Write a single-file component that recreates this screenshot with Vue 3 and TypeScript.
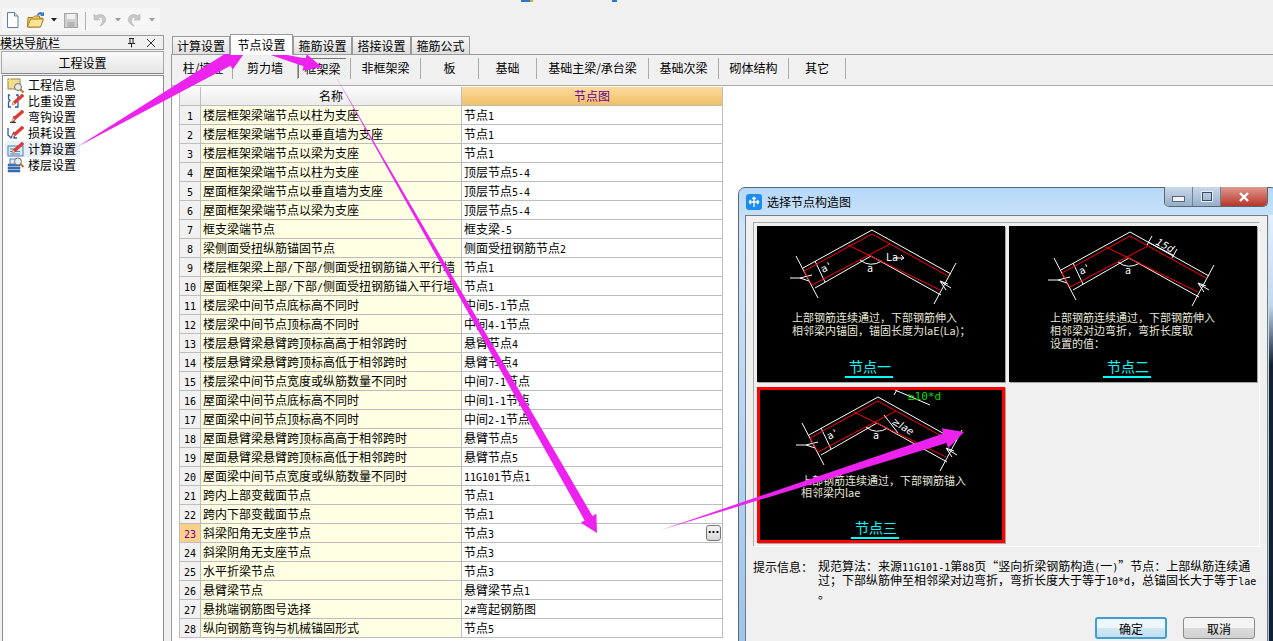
<template>
  <div class="app">
    <div class="toolbar-row">
      <div class="toolbar">
        <svg class="tb-icons" width="160" height="23" viewBox="0 0 160 23">
          <!-- new -->
          <path d="M7.5 4.5h7l3.5 3.5v11.500h-10.500z" fill="#fff" stroke="#5a7ea8" />
          <path d="M14.500 4.500v3.500h3.500" fill="#dce8f4" stroke="#5a7ea8" />
          <!-- open -->
          <path d="M28 9.500h5l1.500-1.500h5v2h3l-3 9h-12z" fill="#f2c75c" stroke="#a87d24" />
          <path d="M27.500 19l3-8h13l-3 8z" fill="#fbe39a" stroke="#a87d24" />
          <path d="M37 7c1-3 4-4 6-2l1-1v4h-4l1.500-1c-1.500-1-3-.5-3.500 1z" fill="#3b78c4" />
          <path d="M51 10h6l-3 3.500z" fill="#222" />
          <!-- save -->
          <rect x="64.500" y="5.500" width="13" height="14" fill="#d0d0d0" stroke="#a4a4a4" />
          <rect x="67" y="6" width="8" height="5" fill="#f2f2f2" />
          <rect x="67.500" y="14" width="7" height="5" fill="#b4b4b4" />
          <line x1="85.500" y1="4" x2="85.500" y2="22" stroke="#b0b0b0" />
          <!-- undo -->
          <path d="M94 6v6h6l-2-2c3-2 6 1 4 5l-2 3c5-2 7-6 5-9-2-3-6-3-9-1z" fill="#c8c8c8" stroke="#b4b4b4" stroke-width=".6" />
          <path d="M115 10h6l-3 3.500z" fill="#9a9a9a" />
          <!-- redo -->
          <path d="M140 6v6h-6l2-2c-3-2-6 1-4 5l2 3c-5-2-7-6-5-9 2-3 6-3 9-1z" fill="#c8c8c8" stroke="#b4b4b4" stroke-width=".6" />
          <path d="M149 10h6l-3 3.500z" fill="#9a9a9a" />
        </svg>
      </div>
    </div>

    <div class="main">
      <aside class="nav">
        <div class="nav-head">
          <span>模块导航栏</span>
          <svg width="34" height="12" viewBox="0 0 34 12">
            <path d="M3 1.500h5M4 1.500v5M7 1.500v5M2 6.500h7M5.500 6.500v4" stroke="#222" fill="none" />
            <path d="M21 2l8 8M29 2l-8 8" stroke="#333" fill="none" />
          </svg>
        </div>
        <div class="nav-btn">工程设置</div>
        <ul class="nav-list">
          <li v-for="item in navItems" :key="item.name" class="nav-item" :class="{ on: item.on }">
            <svg width="18" height="16" viewBox="0 0 18 16">
              <template v-if="item.kind === 'info'">
                <rect x="1" y="2" width="12" height="10" fill="#f2dc9c" stroke="#9a8450" />
                <path d="M3 1l1 2 2 .5-2 1-1 2-1-2-2-1 2-.5z" fill="#ffe94a" />
                <circle cx="11" cy="10" r="3.500" fill="#dfeaf5" stroke="#7a6a50" />
                <path d="M13.500 12.500l3 3" stroke="#b07a20" stroke-width="2" />
              </template>
              <template v-else-if="item.kind === 'calc'">
                <rect x="1" y="5" width="15" height="10" fill="#dbe9f8" stroke="#4f7fb5" />
                <path d="M3 8h8M3 10.500h10M3 13h10" stroke="#4f7fb5" />
              </template>
              <template v-else-if="item.kind === 'floor'">
                <path d="M1 7h12v2H1zM1 10h12v2H1zM1 13h12v2H1z" fill="#3a76c0" stroke="#2a5590" stroke-width=".5" />
                <rect x="3" y="2" width="10" height="5" fill="#e4eef9" stroke="#4f7fb5" />
                <circle cx="11" cy="4.500" r="3.500" fill="#e8edf2" stroke="#777" />
                <path d="M13.500 7l3 3" stroke="#b07a20" stroke-width="2" />
              </template>
              <template v-else-if="item.kind === 'weight'">
                <path d="M3 2H1.500v4L3 7.500 1.500 9v5H4M9 2h2v4L9.500 7.500 11 9v5H8" fill="none" stroke="#2d5a9a" stroke-width="1.300" />
              </template>
              <template v-else-if="item.kind === 'hook'">
                <path d="M7 7v6H3.500M3 13.500h6" fill="none" stroke="#333" stroke-width="1.200" />
              </template>
              <template v-else>
                <path d="M1 3v7l3 3 3-6v6h3" fill="none" stroke="#2d5a9a" stroke-width="1.300" />
              </template>
              <template v-if="item.kind !== 'info' && item.kind !== 'floor'">
                <path d="M6 9l9-8 2 2-9 8-3 1z" fill="#e8392e" stroke="#a8201a" stroke-width=".5" />
                <path d="M5 12l1-3 2 2z" fill="#f3d9a8" />
              </template>
            </svg>
            <span>{{ item.name }}</span>
          </li>
        </ul>
      </aside>

      <section class="work">
        <div class="tabs">
          <div v-for="t in tabs" :key="t" class="tab" :class="{ active: t === '节点设置' }">{{ t }}</div>
        </div>
        <div class="panel">
          <div class="subtabs">
            <div
              v-for="s in subTabs"
              :key="s.name"
              class="subtab"
              :style="{ width: s.w + 'px' }"
            >
              <span :class="{ sel: s.sel }">{{ s.name }}</span>
            </div>
          </div>
          <div class="grid-area">
            <div class="grid">
              <div class="row head">
                <div class="cell num"></div>
                <div class="cell title">名称</div>
                <div class="cell title active-col">节点图</div>
              </div>
              <div v-for="(r, i) in rows" :key="i" class="row">
                <div class="cell num" :class="{ cur: i === 22 }">
                  <span class="lat">{{ i + 1 }}</span>
                </div>
                <div class="cell name">
                  <span v-for="(s, j) in seg(r[0])" :key="j" :class="{ lat: s.lat }">{{ s.t }}</span>
                </div>
                <div class="cell val">
                  <span v-for="(s, j) in seg(r[1])" :key="j" :class="{ lat: s.lat }">{{ s.t }}</span>
                  <button v-if="i === 22" class="more">···</button>
                </div>
              </div>
            </div>
          </div>
        </div>
      </section>
    </div>

    <div class="dialog">
      <div class="dlg-title">
        <svg width="16" height="16" viewBox="0 0 16 16">
          <rect width="16" height="16" rx="3" fill="#1c8cf0" />
          <path d="M8 3v10M3 8h10M3 8l2-2M3 8l2 2M13 8l-2-2M13 8l-2 2M8 3L6.500 5M8 3l1.500 2" stroke="#fff" stroke-width="1.300" fill="none" />
        </svg>
        <span>选择节点构造图</span>
        <div class="win-btns">
          <div class="wb"><i class="min"></i></div>
          <div class="wb"><i class="max"></i></div>
          <div class="wb close">
            <svg width="12" height="10" viewBox="0 0 12 10">
              <path d="M2 1l8 8M10 1l-8 8" stroke="#fff" stroke-width="2.400" />
            </svg>
          </div>
        </div>
      </div>
      <div class="dlg-body">
        <div class="pics">
          <div v-for="c in cells" :key="c.label" class="pic" :class="{ picked: c.picked }">
            <svg width="248" height="156" viewBox="0 0 248 156">
              <g :transform="`translate(${c.dx} ${c.dy})`" fill="none">
                <g stroke="#fff">
                  <polyline points="46,42 115,4 194,48" />
                  <polyline points="58,62 114,30 184,69" />
                  <line x1="39" y1="30" x2="61" y2="72" />
                  <line x1="199" y1="37" x2="177" y2="78" />
                  <line x1="58" y1="35" x2="68" y2="56" />
                  <path d="M43 52l12-3M43 52l9 3M43 52h-10" />
                  <path d="M183 55l6 9M183 55l8 3M184 56l10 6" />
                  <path d="M103 34q10 8 22 1" />
                </g>
                <g stroke="#f00">
                  <polyline points="47,45 115,8 191,50" />
                  <line x1="55" y1="59" x2="133" y2="18" />
                  <line x1="91" y1="19" x2="183" y2="64" />
                  <line x1="47" y1="45" x2="55" y2="59" />
                </g>
                <text x="110" y="46" class="cad-a">a</text>
                <text x="66" y="47" class="cad-a" transform="rotate(-28 66 47)">a'</text>
                <template v-if="c.kind === 1">
                  <text x="129" y="35" class="cad-a">La</text>
                  <path d="M137 32h10l-3 -3M147 32l-3 2" stroke="#fff" />
                </template>
                <template v-if="c.kind === 2">
                  <text x="140" y="16" class="cad-i" transform="rotate(28 140 16)">15d</text>
                  <path d="M133 14l25 13M137 8l-5 9M162 21l-5 9" stroke="#fff" />
                </template>
                <template v-if="c.kind === 3">
                  <path d="M132 -3l35 15M137 -8l-6 10" stroke="#fff" />
                  <path d="M121 22l14 18" stroke="#fff" />
                  <text x="128" y="30" class="cad-i" transform="rotate(32 128 30)">≥lae</text>
                </template>
              </g>
              <text v-if="c.kind === 3" x="151" y="13" class="green">≥10*d</text>
              <text
                v-for="(l, n) in c.lines"
                :key="n"
                :x="c.tx"
                :y="l[1]"
                class="desc"
              >{{ l[0] }}</text>
              <text :x="c.lx" y="146" class="cap">{{ c.label }}</text>
              <line :x1="c.ux" y1="151" :x2="c.ux + 48" y2="151" stroke="#0ff" stroke-width="2" />
            </svg>
          </div>
        </div>
        <div class="hint">
          <div class="hint-label">提示信息：</div>
          <div class="hint-text">
            <div v-for="(l, n) in hintLines" :key="n">
              <span v-for="(s, j) in seg(l)" :key="j" :class="{ lat: s.lat }">{{ s.t }}</span>
            </div>
          </div>
        </div>
        <div class="dlg-btns">
          <button class="btn primary">确定</button>
          <button class="btn">取消</button>
        </div>
      </div>
    </div>

    <svg class="arrows" width="1273" height="641" viewBox="0 0 1273 641">
      <rect x="521" y="0" width="9" height="2" fill="#2a7ac8" />
      <rect x="530" y="0" width="3" height="2" fill="#c8b040" />
      <rect x="612" y="0" width="5" height="2" fill="#2a7ac8" />
      <polygon v-for="(a, i) in arrows" :key="i" :points="a" fill="#ee22ee" />
    </svg>
  </div>
</template>

<script setup lang="ts">
const navItems = [
  { name: '工程信息', kind: 'info' },
  { name: '比重设置', kind: 'weight' },
  { name: '弯钩设置', kind: 'hook' },
  { name: '损耗设置', kind: 'loss' },
  { name: '计算设置', kind: 'calc', on: true },
  { name: '楼层设置', kind: 'floor' }
]

const tabs = ['计算设置', '节点设置', '箍筋设置', '搭接设置', '箍筋公式']

const subTabs = [
  { name: '柱/墙柱', w: 59 },
  { name: '剪力墙', w: 65 },
  { name: '框架梁', w: 53, sel: true },
  { name: '非框架梁', w: 70 },
  { name: '板', w: 58 },
  { name: '基础', w: 58 },
  { name: '基础主梁/承台梁', w: 112 },
  { name: '基础次梁', w: 70 },
  { name: '砌体结构', w: 70 },
  { name: '其它', w: 57 }
]

const rows = [
  ['楼层框架梁端节点以柱为支座', '节点1'],
  ['楼层框架梁端节点以垂直墙为支座', '节点1'],
  ['楼层框架梁端节点以梁为支座', '节点1'],
  ['屋面框架梁端节点以柱为支座', '顶层节点5-4'],
  ['屋面框架梁端节点以垂直墙为支座', '顶层节点5-4'],
  ['屋面框架梁端节点以梁为支座', '顶层节点5-4'],
  ['框支梁端节点', '框支梁-5'],
  ['梁侧面受扭纵筋锚固节点', '侧面受扭钢筋节点2'],
  ['楼层框架梁上部/下部/侧面受扭钢筋锚入平行墙', '节点1'],
  ['屋面框架梁上部/下部/侧面受扭钢筋锚入平行墙', '节点1'],
  ['楼层梁中间节点底标高不同时', '中间5-1节点'],
  ['楼层梁中间节点顶标高不同时', '中间4-1节点'],
  ['楼层悬臂梁悬臂跨顶标高高于相邻跨时', '悬臂节点4'],
  ['楼层悬臂梁悬臂跨顶标高低于相邻跨时', '悬臂节点4'],
  ['楼层梁中间节点宽度或纵筋数量不同时', '中间7-1节点'],
  ['屋面梁中间节点底标高不同时', '中间1-1节点'],
  ['屋面梁中间节点顶标高不同时', '中间2-1节点'],
  ['屋面悬臂梁悬臂跨顶标高高于相邻跨时', '悬臂节点5'],
  ['屋面悬臂梁悬臂跨顶标高低于相邻跨时', '悬臂节点5'],
  ['屋面梁中间节点宽度或纵筋数量不同时', '11G101节点1'],
  ['跨内上部变截面节点', '节点1'],
  ['跨内下部变截面节点', '节点1'],
  ['斜梁阳角无支座节点', '节点3'],
  ['斜梁阴角无支座节点', '节点3'],
  ['水平折梁节点', '节点3'],
  ['悬臂梁节点', '悬臂梁节点1'],
  ['悬挑端钢筋图号选择', '2#弯起钢筋图'],
  ['纵向钢筋弯钩与机械锚固形式', '节点5']
]

const cells = [
  {
    label: '节点一', kind: 1, dx: 0, dy: 0, tx: 35, lx: 92, ux: 88,
    lines: [['上部钢筋连续通过，下部钢筋伸入', 96], ['相邻梁内锚固，锚固长度为laE(La)；', 109]]
  },
  {
    label: '节点二', kind: 2, dx: 6, dy: 2, tx: 41, lx: 98, ux: 94,
    lines: [['上部钢筋连续通过，下部钢筋伸入', 96], ['相邻梁对边弯折，弯折长度取', 109], ['设置的值：', 122]]
  },
  {
    label: '节点三', kind: 3, dx: 6, dy: 6, tx: 44, lx: 98, ux: 94, picked: true,
    lines: [['上部钢筋连续通过，下部钢筋锚入', 98], ['相邻梁内lae', 110]]
  }
]

const hintLines = [
  '规范算法：来源11G101-1第88页“竖向折梁钢筋构造(一)”节点：上部纵筋连续通',
  '过；下部纵筋伸至相邻梁对边弯折，弯折长度大于等于10*d，总锚固长大于等于lae',
  '。'
]

// latin runs get a narrower font, the original uses half-width 6px glyphs
const seg = (text: string) => {
  const parts = text.match(/[\x20-\x7e]+|[^\x20-\x7e]+/g) || []
  return parts.map((t) => ({ t, lat: /^[\x20-\x7e]/.test(t) }))
}

// tapered arrow: pointed tail, shaft width w, head of length hl and width hw
const arrow = (x0: number, y0: number, x1: number, y1: number, w: number, hl: number, hw: number) => {
  const len = Math.hypot(x1 - x0, y1 - y0)
  const ux = (x1 - x0) / len
  const uy = (y1 - y0) / len
  const nx = x1 - ux * hl
  const ny = y1 - uy * hl
  const pt = (d: number) => `${nx - uy * d},${ny + ux * d}`
  return [`${x0},${y0}`, pt(w / 2), pt(hw / 2), `${x1},${y1}`, pt(-hw / 2), pt(-w / 2)].join(' ')
}

const arrows = [
  arrow(77, 147, 248, 48, 13, 24, 22),
  arrow(250, 48, 322, 67, 8, 18, 17),
  arrow(335, 75, 597, 533, 9, 17, 18),
  arrow(661, 530, 964, 432, 10, 20, 21)
]
</script>

<style scoped>
.app {
  position: relative;
  width: 1273px;
  height: 641px;
  overflow: hidden;
  display: flex;
  flex-direction: column;
  background: #f0f0f0;
  color: #000;
  font: 12px/16px "Noto Sans CJK SC", sans-serif;
}
.lat {
  font-family: "DejaVu Sans Mono", monospace;
  font-size: 10px;
}
.toolbar-row {
  height: 35px;
  padding: 8px 0 0 2px;
  box-sizing: border-box;
  flex: none;
}
.toolbar {
  width: 158px;
  height: 23px;
  background: #f6f6f6;
  border-radius: 2px;
}
.tb-icons {
  display: block;
  margin-left: -2px;
}
.main {
  flex: 1;
  display: flex;
  min-height: 0;
}
.nav {
  width: 164px;
  flex: none;
  display: flex;
  flex-direction: column;
}
.nav-head {
  height: 15px;
  display: flex;
  align-items: center;
  justify-content: space-between;
  border: 1px solid #9a9a9a;
  border-left: none;
  line-height: 13px;
  box-sizing: border-box;
  padding-right: 3px;
}
.nav-btn {
  height: 23px;
  margin: 1px 0 1px 1px;
  box-sizing: border-box;
  border: 1px solid #a8a8a8;
  border-bottom-color: #888;
  background: linear-gradient(#f8f8f8, #e6e6e6);
  text-align: center;
  line-height: 22px;
}
.nav-list {
  flex: 1;
  margin: 0 0 0 2px;
  padding: 1px 0 0 2px;
  list-style: none;
  background: #fff;
  border: 1px solid #8c8c8c;
  border-bottom: none;
}
.nav-item {
  height: 16px;
  display: flex;
  align-items: center;
  gap: 3px;
  width: 75px;
  padding-left: 2px;
  box-sizing: border-box;
  white-space: nowrap;
}
.nav-item.on {
  background: #e9f0f7;
  border-radius: 4px;
}
.work {
  flex: 1;
  min-width: 0;
  padding-left: 7px;
  background: #f0f0f0;
  display: flex;
  flex-direction: column;
}
.tabs {
  height: 19px;
  flex: none;
  display: flex;
  align-items: flex-end;
  padding-left: 1px;
  position: relative;
  z-index: 1;
}
.tab {
  height: 18px;
  width: 59px;
  box-sizing: border-box;
  border: 1px solid #9a9a9a;
  border-bottom: none;
  background: linear-gradient(#f8f8f8, #dedede);
  text-align: center;
  line-height: 18px;
}
.tab.active {
  height: 21px;
  width: 63px;
  margin: -1px 0 -1px;
  background: #fff;
  line-height: 19px;
  font-size: 12px;
}
.tab:first-child {
  width: 58px;
}
.panel {
  flex: 1;
  min-height: 0;
  border-top: 1px solid #9a9a9a;
  border-left: 1px solid #9a9a9a;
  display: flex;
  flex-direction: column;
}
.subtabs {
  height: 31px;
  flex: none;
  box-sizing: border-box;
  padding: 3px 0 0 2px;
  display: flex;
  align-items: flex-start;
  border-bottom: 1px solid #ababab;
}
.subtab {
  height: 21px;
  box-sizing: border-box;
  border-right: 1px solid #aaa;
  display: flex;
  align-items: center;
  justify-content: center;
  line-height: 19px;
  padding-bottom: 2px;
}
.subtab .sel {
  box-sizing: border-box;
  align-self: flex-start;
  width: 48px;
  height: 20px;
  margin-right: 4px;
  text-align: center;
  border-top: 1px solid #777;
  border-left: 1px solid #777;
  background: repeating-conic-gradient(#e2e2e2 0 25%, #fff 0 50%) 0 0 / 2px 2px;
}
.grid-area {
  flex: 1;
  background: #fff;
  padding: 1px 0 0 7px;
  min-height: 0;
}
.grid {
  width: 544px;
}
.row {
  display: grid;
  grid-template-columns: 22px 261px 261px;
  height: 19px;
}
.cell {
  box-sizing: border-box;
  height: 19px;
  border-right: 1px solid #bdbdbd;
  border-bottom: 1px solid #bdbdbd;
  line-height: 17px;
  white-space: nowrap;
  overflow: hidden;
}
.num {
  background: #f1f1f1;
  text-align: center;
  border-left: 1px solid #bdbdbd;
}
.num.cur {
  background: #fdd08a;
  color: #660099;
}
.head .num,
.head .title {
  background: linear-gradient(#fbfbfb, #ececec);
  text-align: center;
}
.head .active-col {
  background: linear-gradient(#f9dc9e, #f2c066);
  color: #660099;
}
.name {
  background: #ffffe3;
  padding-left: 2px;
}
.val {
  position: relative;
  padding-left: 2px;
  background: #fff;
}
.more {
  position: absolute;
  right: 1px;
  top: 1px;
  width: 15px;
  height: 16px;
  padding: 0;
  border: 1px solid #777;
  border-radius: 3px;
  background: linear-gradient(#f4f4f4, #d8d8d8);
  font: bold 10px/12px "DejaVu Sans", sans-serif;
}
.dialog {
  position: absolute;
  left: 738px;
  top: 187px;
  width: 540px;
  height: 460px;
  box-sizing: border-box;
  border: 1px solid #5c6670;
  border-radius: 7px 7px 0 0;
  background: linear-gradient(#b6d8f8, #cfe4f9 40px, #9dc4ea);
  padding: 0 9px 0 6px;
  display: flex;
  flex-direction: column;
}
/* the desktop behind shows through the glass frame on the right */
.dialog::after {
  content: "";
  position: absolute;
  left: 530px;
  top: 27px;
  bottom: 0;
  width: 9px;
  background: linear-gradient(#e4f0fb, #c2d8ec 90px, #16202c 150px);
}
.dlg-title {
  height: 27px;
  flex: none;
  display: flex;
  align-items: center;
  gap: 5px;
  position: relative;
  padding-left: 1px;
}
.win-btns {
  position: absolute;
  right: 0;
  top: -1px;
  height: 19px;
  display: flex;
  border: 1px solid #5c6670;
  border-top: none;
  border-radius: 0 0 5px 5px;
  overflow: hidden;
  z-index: 1;
}
.wb {
  width: 27px;
  display: flex;
  align-items: center;
  justify-content: center;
  background: linear-gradient(#c9d9ea, #95aecb);
  border-right: 1px solid #6f8197;
}
.wb.close {
  width: 46px;
  border-right: none;
  background: linear-gradient(#e09a90, #b8352a);
}
.min {
  display: block;
  width: 11px;
  height: 4px;
  margin-top: 5px;
  background: #f2f2f2;
  border: 1px solid #56677c;
}
.max {
  display: block;
  width: 8px;
  height: 7px;
  border: 1px solid #3c4a5c;
  outline: 1px solid #e6eef6;
}
.dlg-body {
  flex: 1;
  min-height: 0;
  background: #f0f0f0;
  border: 1px solid #6f7d8a;
  padding: 6px 8px 0 7px;
  box-sizing: border-box;
}
.pics {
  width: 507px;
  height: 325px;
  box-sizing: border-box;
  border: 1px solid;
  border-color: #aaa #fff #fff #aaa;
  padding: 3px;
  background: #f0f0f0;
  display: grid;
  grid-template-columns: 248px 248px;
  grid-auto-rows: 156px;
  gap: 5px 4px;
}
.pic {
  background: #000;
  position: relative;
  height: 156px;
  width: 248px;
  box-shadow: 1px 1px 0 #a4a4a4;
}
.pic svg {
  display: block;
}
.pic.picked {
  outline: 3px solid #f00;
  outline-offset: -3px;
}
.desc {
  fill: #e6e6d8;
  font-size: 11px;
  font-family: "Noto Sans CJK SC", sans-serif;
}
.cap {
  fill: #0ff;
  font-size: 14px;
  font-family: "Noto Sans CJK SC", sans-serif;
}
.cad-a {
  fill: #fff;
  font: 10px "DejaVu Sans Mono", monospace;
}
.cad-i {
  fill: #fff;
  font: italic 10px "DejaVu Sans", sans-serif;
}
.green {
  fill: #0d0;
  font: 11px "DejaVu Sans Mono", monospace;
}
.hint {
  display: flex;
  margin-top: 13px;
  line-height: 12px;
}
.hint-label {
  width: 65px;
  flex: none;
  padding-top: 1px;
}
.hint-text {
  white-space: nowrap;
}
.dlg-btns {
  display: flex;
  gap: 16px;
  justify-content: flex-end;
  margin: 17px 4px 0 0;
}
.btn {
  width: 72px;
  height: 22px;
  padding: 0;
  border: 1px solid #8a8a8a;
  border-radius: 3px;
  background: linear-gradient(#f4f4f4 50%, #dcdcdc 50%, #d0d0d0);
  font: 12px "Noto Sans CJK SC", sans-serif;
}
.btn.primary {
  border: 2px solid #3f9fd0;
  background: linear-gradient(#eef7fc 50%, #d2e8f4 50%, #c4dff0);
}
.arrows {
  position: absolute;
  left: 0;
  top: 0;
  pointer-events: none;
}
</style>
